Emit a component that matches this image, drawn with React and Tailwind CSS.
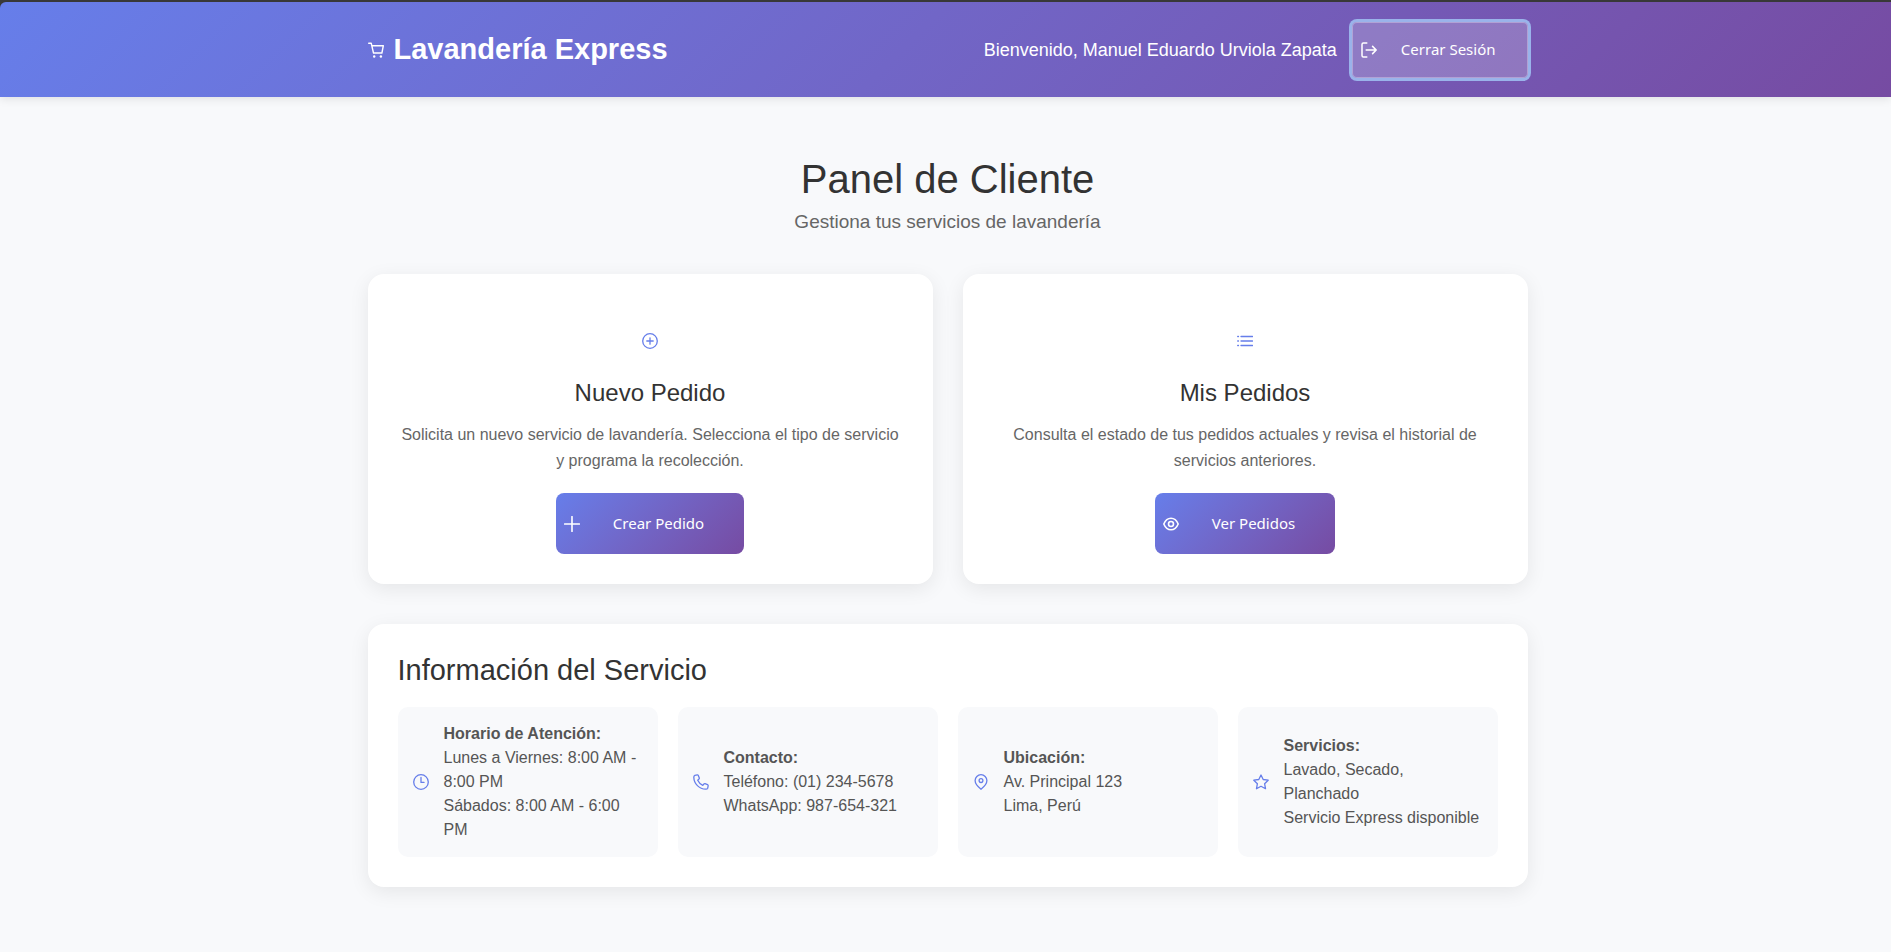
import React from 'react';

const ICONS = {
  cart: (
    <>
      <path d="M.7 1.200h2.500l2.300 9.800h8.400L15.300 3.800H3.900" />
      <circle cx="6.200" cy="14.500" r="1.200" fill="currentColor" stroke="none" />
      <circle cx="12.900" cy="14.500" r="1.200" fill="currentColor" stroke="none" />
    </>
  ),
  signOut: (
    <>
      <path d="M5.800.9H2.400Q1 .9 1 2.400v11.200Q1 15.100 2.400 15.100H5.800" />
      <path d="M5.200 8H15M11.600 4.400 15.200 8l-3.600 3.600" />
    </>
  ),
  plusCircle: (
    <>
      <circle cx="8" cy="8" r="7.300" />
      <path d="M8 4.800v6.400M4.800 8h6.400" />
    </>
  ),
  list: <path d="M4 3.500h11.500M4 8h11.500M4 12.500h11.500M.7 3.500h.8M.7 8h.8M.7 12.500h.8" />,
  plus: <path d="M8 .6v14.800M.6 8h14.800" />,
  eye: (
    <>
      <path d="M.8 8C2.400 4.200 5 2.200 8 2.200S13.600 4.200 15.200 8C13.600 11.800 11 13.800 8 13.800S2.400 11.800.8 8Z" />
      <circle cx="8" cy="8" r="2.500" />
    </>
  ),
  clock: (
    <>
      <circle cx="8" cy="8" r="7.300" />
      <path d="M8 3.500V8.400h3" />
    </>
  ),
  phone: (
    <path d="M4.300.9 1.800 1.300Q.8 1.700.8 3.200C1 9.800 6.200 15 12.800 15.200Q14.300 15.200 14.700 14.200L15.200 11.700Q15.200 11 14.500 10.700L12 9.700Q11.300 9.500 10.900 10L9.800 11.300Q6.300 9.700 4.700 6.200L6 5.100Q6.500 4.700 6.300 4L5.300 1.500Q5 .8 4.300.9Z" />
  ),
  marker: (
    <>
      <path d="M8 15.300C6 13.700 2.100 10.300 2.100 6.600a5.900 5.900 0 0 1 11.800 0C13.900 10.300 10 13.700 8 15.300Z" />
      <circle cx="8" cy="6.600" r="1.900" />
    </>
  ),
  star: <path d="m8 1 2.200 4.500 5 .7-3.600 3.500.9 5L8 12.300l-4.500 2.400.9-5L.8 6.200l5-.7Z" />,
};

function Icon({ name, className = '', weight = 1.3 }) {
  return (
    <svg
      viewBox="0 0 16 16"
      aria-hidden="true"
      className={`size-4 shrink-0 fill-none stroke-current ${className}`}
      strokeWidth={weight}
      strokeLinecap="round"
      strokeLinejoin="round"
    >
      {ICONS[name]}
    </svg>
  );
}

const ACTIONS = [
  {
    icon: 'plusCircle',
    title: 'Nuevo Pedido',
    text: 'Solicita un nuevo servicio de lavandería. Selecciona el tipo de servicio y programa la recolección.',
    button: 'Crear Pedido',
    buttonIcon: 'plus',
  },
  {
    icon: 'list',
    title: 'Mis Pedidos',
    text: 'Consulta el estado de tus pedidos actuales y revisa el historial de servicios anteriores.',
    button: 'Ver Pedidos',
    buttonIcon: 'eye',
  },
];

const INFO = [
  { icon: 'clock', title: 'Horario de Atención:', lines: ['Lunes a Viernes: 8:00 AM - 8:00 PM', 'Sábados: 8:00 AM - 6:00 PM'] },
  { icon: 'phone', title: 'Contacto:', lines: ['Teléfono: (01) 234-5678', 'WhatsApp: 987-654-321'] },
  { icon: 'marker', title: 'Ubicación:', lines: ['Av. Principal 123', 'Lima, Perú'] },
  { icon: 'star', title: 'Servicios:', lines: ['Lavado, Secado, Planchado', 'Servicio Express disponible'] },
];

function ActionCard({ icon, title, text, button, buttonIcon }) {
  return (
    <article className="flex flex-col items-center rounded-2xl bg-white p-[30px] text-center shadow-[0_5px_20px_rgba(0,0,0,0.08)]">
      <Icon name={icon} className="mt-[29px] text-[#667eea]" />
      <h2 className="mt-7 text-2xl text-[#333333]">{title}</h2>
      <p className="mt-[13px] leading-[26px] text-[#666666]">{text}</p>
      <button
        type="button"
        className="mt-[19px] flex h-[61px] items-center rounded-lg bg-linear-135 from-[#667eea] to-[#764ba2] pr-10 pl-2 font-['Noto_Sans',sans-serif] text-[15px] text-white"
      >
        <Icon name={buttonIcon} weight={1.6} className="mr-[33px]" />
        {button}
      </button>
    </article>
  );
}

export default function App() {
  return (
    <div className="min-h-screen bg-[#f8f9fb] font-['Liberation_Sans',Arial,sans-serif] text-base text-[#333333]">
      <div className="bg-[#3a3a3a] pt-0.5">
        <header className="rounded-tl-md bg-linear-135 from-[#667eea] to-[#764ba2] pl-1 text-white shadow-[0_2px_10px_rgba(0,0,0,0.1)]">
          <div className="mx-auto flex h-[95px] max-w-[1200px] items-center justify-between px-5">
            <div className="flex items-center gap-2.5">
              <Icon name="cart" weight={1.4} />
              <span className="text-[29px] font-bold">Lavandería Express</span>
            </div>
            <div className="flex items-center gap-[15px]">
              <span className="text-lg">Bienvenido, Manuel Eduardo Urviola Zapata</span>
              <button
                type="button"
                className="flex h-14 items-center rounded-[5px] border border-white/30 bg-white/20 pr-[31px] pl-2 font-['Noto_Sans',sans-serif] text-[15px] ring-3 ring-[#9ab3ea]"
              >
                <Icon name="signOut" weight={1.5} className="mr-6" />
                Cerrar Sesión
              </button>
            </div>
          </div>
        </header>
      </div>

      <main className="pl-1">
        <div className="mx-auto max-w-[1200px] px-5 pt-[58px] pb-10">
          <div className="text-center">
            <h1 className="text-[40px] leading-12">Panel de Cliente</h1>
            <p className="mt-[5px] text-[19px] leading-7 text-[#666666]">Gestiona tus servicios de lavandería</p>
          </div>

          <section aria-label="Pedidos" className="mt-[38px] grid grid-cols-2 gap-[30px]">
            {ACTIONS.map((action) => (
              <ActionCard key={action.title} {...action} />
            ))}
          </section>

          <section className="mt-10 rounded-2xl bg-white p-[30px] shadow-[0_5px_20px_rgba(0,0,0,0.08)]">
            <h2 className="text-[29px] leading-8">Información del Servicio</h2>
            <div className="mt-[21px] grid grid-cols-4 gap-5">
              {INFO.map(({ icon, title, lines }) => (
                <div key={title} className="flex items-center gap-[15px] rounded-[10px] bg-[#f8f9fb] p-[15px] leading-6 text-[#555555]">
                  <Icon name={icon} className="text-[#667eea]" />
                  <div>
                    <strong className="block">{title}</strong>
                    {lines.map((line) => (
                      <p key={line}>{line}</p>
                    ))}
                  </div>
                </div>
              ))}
            </div>
          </section>
        </div>
      </main>
    </div>
  );
}
